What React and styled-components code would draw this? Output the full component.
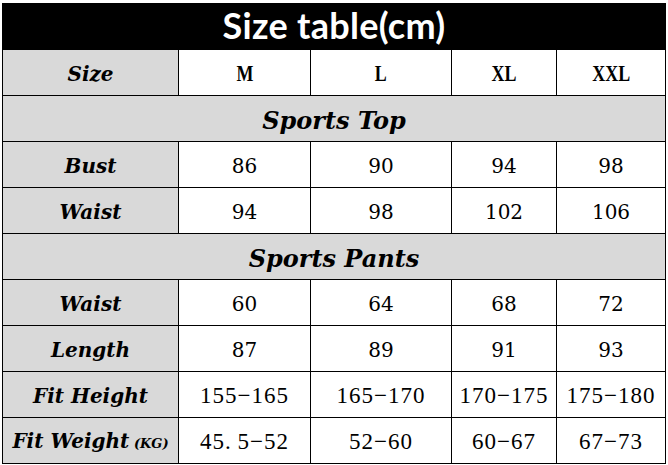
import React from 'react';
import styled, { createGlobalStyle } from 'styled-components';

const GlobalStyle = createGlobalStyle`
  html, body {
    margin: 0;
    padding: 0;
    background: #ffffff;
  }
`;

const Page = styled.div`
  padding: 3px 2px 0 2px;
  width: 668px;
  box-sizing: border-box;
`;

const Table = styled.table`
  border-collapse: collapse;
  table-layout: fixed;
  width: 663px;
`;

const Row = styled.tr`
  height: 46px;
`;

const Title = styled.th`
  background: #000000;
  color: #ffffff;
  font-family: Lato, "Open Sans", sans-serif;
  font-weight: 700;
  font-size: 36px;
  line-height: 40px;
  text-align: center;
  border: 1px solid #000;
  padding: 0 0 3px 0;
  letter-spacing: 0.3px;
`;

const Label = styled.td`
  background: #d9d9d9;
  border: 1px solid #000;
  text-align: center;
  padding: 3px 0 0 0;
  line-height: 26px;
  font-family: "DejaVu Serif", "Liberation Serif", serif;
  font-style: italic;
  font-weight: 700;
  font-size: 20px;
  color: #000;
  white-space: nowrap;
`;

const Section = styled.td`
  background: #d9d9d9;
  border: 1px solid #000;
  text-align: center;
  padding: 4px 0 0 0;
  line-height: 30px;
  font-family: "DejaVu Serif", "Liberation Serif", serif;
  font-style: italic;
  font-weight: 700;
  font-size: 24px;
  color: #000;
`;

const Cell = styled.td`
  background: #ffffff;
  border: 1px solid #000;
  text-align: center;
  padding: 3px 0 0 0;
  line-height: 26px;
  font-family: ${p => (p.wide ? '"Liberation Serif", serif' : '"DejaVu Serif", "Liberation Serif", serif')};
  font-size: ${p => (p.wide ? '23px' : '20px')};
  letter-spacing: ${p => (p.wide ? '1px' : '0')};
  color: #000;
  white-space: nowrap;
`;

const SizeCell = styled(Cell)`
  font-family: "Liberation Serif", serif;
  font-weight: 700;
  font-size: 23px;
`;

const Narrow = styled.span`
  display: inline-block;
  transform: scaleX(0.78);
`;

const Unit = styled.span`
  font-size: 13px;
`;

const sections = [
  {
    name: 'Sports Top',
    rows: [
      { label: 'Bust', values: ['86', '90', '94', '98'] },
      { label: 'Waist', values: ['94', '98', '102', '106'] },
    ],
  },
  {
    name: 'Sports Pants',
    rows: [
      { label: 'Waist', values: ['60', '64', '68', '72'] },
      { label: 'Length', values: ['87', '89', '91', '93'] },
      { label: 'Fit Height', values: ['155−165', '165−170', '170−175', '175−180'], wide: true },
      { label: 'Fit Weight', unit: '(KG)', values: ['45.\u20095−52', '52−60', '60−67', '67−73'], wide: true },
    ],
  },
];

const sizes = ['M', 'L', 'XL', 'XXL'];

export default function App() {
  return (
    <Page>
      <GlobalStyle />
      <Table>
        <colgroup>
          <col style={{ width: 176 }} />
          <col style={{ width: 132 }} />
          <col style={{ width: 141 }} />
          <col style={{ width: 105 }} />
          <col style={{ width: 109 }} />
        </colgroup>
        <tbody>
          <Row>
            <Title colSpan={5}>Size table(cm)</Title>
          </Row>
          <Row>
            <Label>Size</Label>
            {sizes.map(s => (
              <SizeCell key={s}>
                <Narrow>{s}</Narrow>
              </SizeCell>
            ))}
          </Row>
          {sections.map(section => (
            <React.Fragment key={section.name}>
              <Row>
                <Section colSpan={5}>{section.name}</Section>
              </Row>
              {section.rows.map(row => (
                <Row key={row.label}>
                  <Label>
                    {row.label}
                    {row.unit && <Unit> {row.unit}</Unit>}
                  </Label>
                  {row.values.map((v, i) => (
                    <Cell key={i} wide={row.wide}>{v}</Cell>
                  ))}
                </Row>
              ))}
            </React.Fragment>
          ))}
        </tbody>
      </Table>
    </Page>
  );
}
